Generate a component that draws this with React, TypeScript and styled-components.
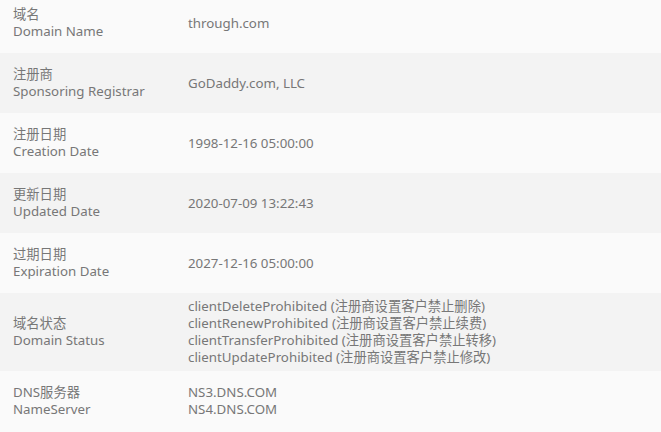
import styled, { createGlobalStyle } from "styled-components";

const GlobalStyle = createGlobalStyle`
  html, body {
    margin: 0;
    padding: 0;
    background: #fafafa;
  }
  body {
    font-family: "Noto Sans", "Noto Sans CJK SC", sans-serif;
    font-size: 13.3px;
    color: #777;
  }
`;

const Table = styled.div`
  display: flex;
  flex-direction: column;
  margin-top: -7px;
`;

const Row = styled.div<{ $shaded: boolean }>`
  display: grid;
  grid-template-columns: 175px 1fr;
  align-items: center;
  min-height: 60px;
  box-sizing: border-box;
  padding: 5px 0 5px 13px;
  background: ${(p) => (p.$shaded ? "#f3f3f3" : "#fafafa")};
  line-height: 17px;
`;

const Label = styled.div`
  display: flex;
  flex-direction: column;
`;

const Values = styled.div`
  display: flex;
  flex-direction: column;
`;

interface Item {
  zh: string;
  en: string;
  values: string[];
}

const items: Item[] = [
  { zh: "域名", en: "Domain Name", values: ["through.com"] },
  { zh: "注册商", en: "Sponsoring Registrar", values: ["GoDaddy.com, LLC"] },
  { zh: "注册日期", en: "Creation Date", values: ["1998-12-16 05:00:00"] },
  { zh: "更新日期", en: "Updated Date", values: ["2020-07-09 13:22:43"] },
  { zh: "过期日期", en: "Expiration Date", values: ["2027-12-16 05:00:00"] },
  {
    zh: "域名状态",
    en: "Domain Status",
    values: [
      "clientDeleteProhibited (注册商设置客户禁止删除)",
      "clientRenewProhibited (注册商设置客户禁止续费)",
      "clientTransferProhibited (注册商设置客户禁止转移)",
      "clientUpdateProhibited (注册商设置客户禁止修改)",
    ],
  },
  { zh: "DNS服务器", en: "NameServer", values: ["NS3.DNS.COM", "NS4.DNS.COM"] },
];

export default function App() {
  return (
    <>
      <GlobalStyle />
      <Table>
        {items.map((item, i) => (
          <Row key={item.en} $shaded={i % 2 === 1}>
            <Label>
              <span>{item.zh}</span>
              <span>{item.en}</span>
            </Label>
            <Values>
              {item.values.map((v) => (
                <span key={v}>{v}</span>
              ))}
            </Values>
          </Row>
        ))}
      </Table>
    </>
  );
}
